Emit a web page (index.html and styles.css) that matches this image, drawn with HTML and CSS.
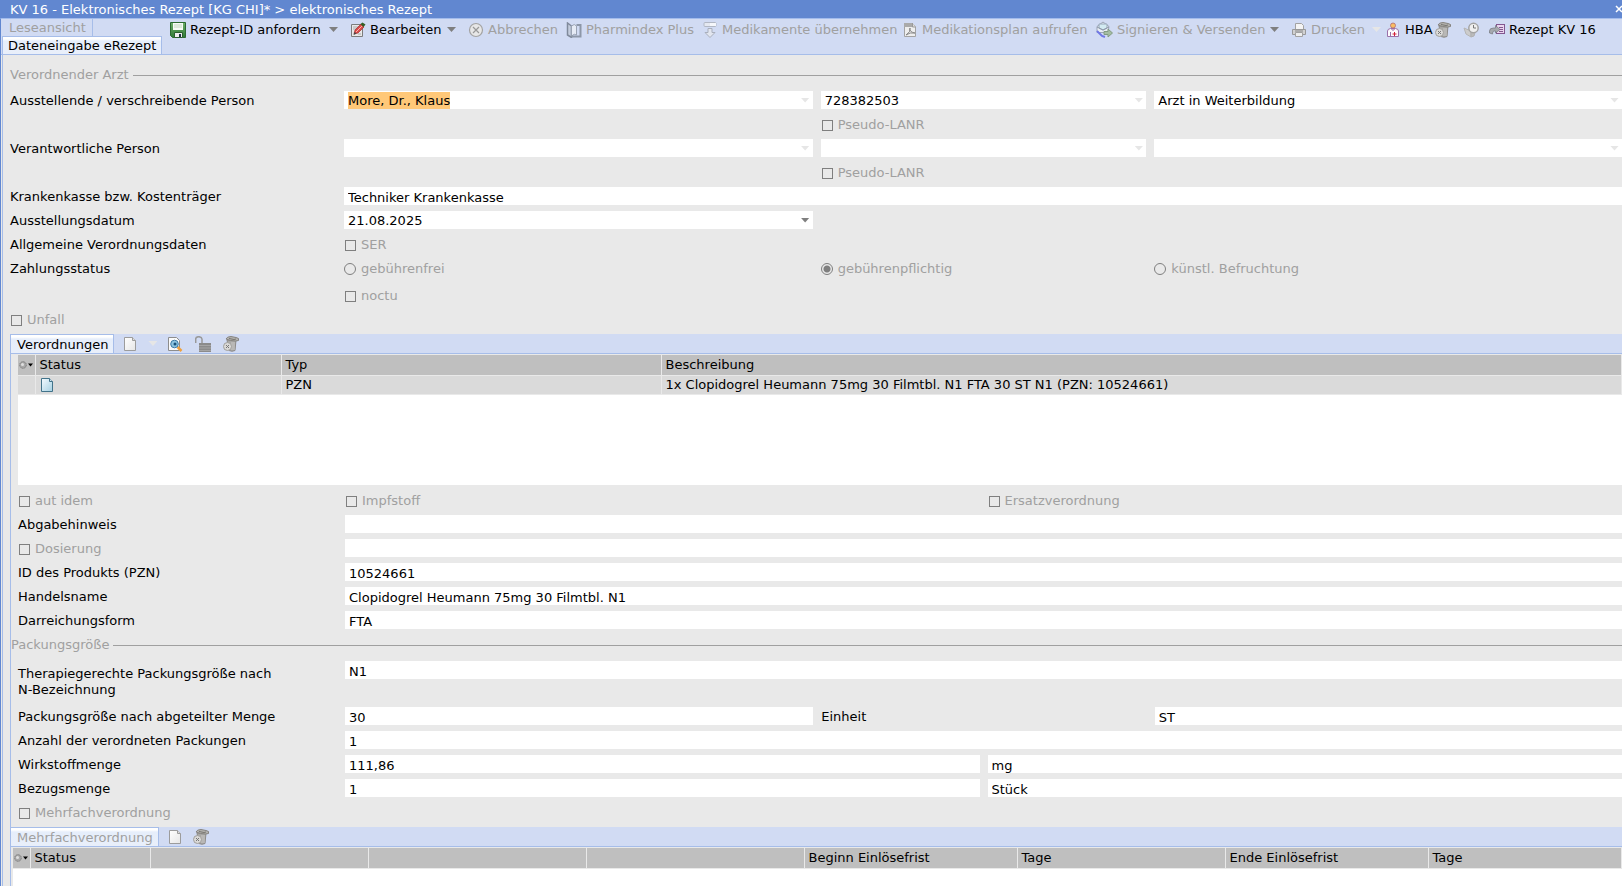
FILE: index.html
```html
<!DOCTYPE html>
<html lang="de">
<head>
<meta charset="utf-8">
<title>KV 16 - Elektronisches Rezept</title>
<link rel="stylesheet" href="styles.css">
</head>
<body>
<svg class="defs" aria-hidden="true">
  <defs>
    <linearGradient id="gPage" x1="0" y1="0" x2="1" y2="1"><stop offset="0" stop-color="#fff"/><stop offset="1" stop-color="#e6e6e6"/></linearGradient>
    <linearGradient id="gBlue" x1="0" y1="0" x2="1" y2="1"><stop offset="0" stop-color="#f4fbff"/><stop offset="1" stop-color="#a5d0e2"/></linearGradient>
    <linearGradient id="gGreen" x1="0" y1="0" x2="0" y2="1"><stop offset="0" stop-color="#6fae6a"/><stop offset="1" stop-color="#2f7a35"/></linearGradient>
    <symbol id="trash" viewBox="0 0 16 16">
      <path d="M4 4h9l-1 10.500q-3 1.500-6 0z" fill="#a9a8a6" stroke="#8d8b88"/>
      <path d="M9 6v8M11 6v8" stroke="#c9c8c6"/>
      <path d="M3 3q1-2.500 5-2.500l5 1 2.500 1v2l-3 .5-5-.5z" fill="#b4b3b0" stroke="#85837f"/>
      <path d="m6 2.500 5 1 2-.5" fill="none" stroke="#77756f"/>
      <circle cx="4.500" cy="10.500" r="4" fill="#dad9d7" stroke="#a09f9c"/>
      <path d="m3 9 3 3m0-3-3 3" stroke="#777"/>
    </symbol>
    <symbol id="page" viewBox="0 0 16 16"><path d="M2.500 1.500h8l3 3v10h-11z" fill="url(#gPage)" stroke="#9c9c9c"/><path d="M10.500 1.500v3h3" fill="#ddd" stroke="#9c9c9c"/></symbol>
    <symbol id="gear" viewBox="0 0 16 10"><circle cx="5" cy="5" r="3.300" fill="#a8a8a8" stroke="#7d7d7d" stroke-dasharray="1.600 .6"/><circle cx="4.500" cy="4.500" r="1.500" fill="#dedede"/><path d="M10 3.500h5l-2.500 3z" fill="#000"/></symbol>
  </defs>
</svg>
<header class="titlebar">
  <h1>KV 16 - Elektronisches Rezept [KG CHI]* &gt; elektronisches Rezept</h1>
  <button class="close" type="button" aria-label="Schließen"><svg viewBox="0 0 8 8"><path d="m1 1 6 6m0-6-6 6" stroke="#fff" stroke-width="1.500"/></svg></button>
</header>
<div class="window">
  <div class="topbar">
    <div class="tabs">
      <button class="tab-plain" type="button" disabled>Leseansicht</button>
      <button class="tab" type="button">Dateneingabe eRezept</button>
    </div>
    <div class="toolbar">
      <div class="tool t-save"><button type="button"><svg viewBox="0 0 16 16"><path d="M.5.500h15v15H2.500l-2-2z" fill="url(#gGreen)" stroke="#2c6a31"/><path d="M3 1h10v7H3z" fill="#f7fbf5"/><path d="M4 3h8M4 5h8" stroke="#c3d6bf"/><path d="M4.500 10.500h8v5h-8z" fill="#eee" stroke="#295e2c"/><path d="M9 12h2v3H9z" fill="#234"/></svg>Rezept-ID anfordern</button><button class="drop" type="button" aria-label="Optionen"></button></div>
      <div class="tool t-edit"><button type="button"><svg viewBox="0 0 16 16"><path d="M1.500 2.500h11v12h-11z" fill="#e8e8e8" stroke="#7c7c7c"/><path d="M3 5h6M3 7h4M8 12h3" stroke="#aaa"/><path d="m4 12 1-4 6-6 3 3-6 6z" fill="#d94a4a" stroke="#a23030" stroke-width=".7"/><path d="m6 10 6-6" stroke="#ffb0a8"/><path d="m10.500 2 2-1.500 3 2-2 2.500z" fill="#355f25"/><path d="m3.500 13 1-3 2 1.500z" fill="#444"/></svg>Bearbeiten</button><button class="drop" type="button" aria-label="Optionen"></button></div>
      <div class="tool t-cancel"><button type="button" disabled><svg viewBox="0 0 16 16"><circle cx="8" cy="8" r="6.500" fill="#e7e7e7" stroke="#a3a3a3" stroke-width="1.200"/><path d="m5 5 6 6m0-6-6 6" stroke="#999" stroke-width="1.200"/></svg>Abbrechen</button></div>
      <div class="tool t-pharm"><button type="button" disabled><svg viewBox="0 0 16 16"><path d="M1.500 1v12l4 2.500V4z" fill="#c4cddd" stroke="#808a9b" stroke-width="1.500"/><path d="M5.500 4q3-3 5 0v9q-2-2-5 1z" fill="#e6ebf5" stroke="#9aa3b3"/><path d="M10.500 3h4v11.500h-9" fill="none" stroke="#8d97a8" stroke-width="2"/></svg>Pharmindex Plus</button></div>
      <div class="tool t-medi"><button type="button" disabled><svg viewBox="0 0 16 16"><rect x="2" y=".5" width="12" height="4" rx="1" fill="#e4e8f1" stroke="#b1b7c4"/><path d="M8 1h6v3H8z" fill="#f5f7fb"/><path d="M6 6.500h4v4h3l-5 5-5-5h3z" fill="#e2e6ef" stroke="#a9afbc"/></svg>Medikamente übernehmen</button></div>
      <div class="tool t-plan"><button type="button" disabled><svg viewBox="0 0 16 16"><path d="M2.500 1.500h8l3 3v10h-11z" fill="#eee" stroke="#a3a3a3"/><path d="M2 1h8v4H2z" fill="#aaa"/><path d="M10.500 1v4h3" fill="#ddd" stroke="#999"/><path d="M4 13q5-3 4-7-1 4 5 5-5-1-9 2" fill="none" stroke="#888"/></svg>Medikationsplan aufrufen</button></div>
      <div class="tool t-sign"><button type="button" disabled><svg class="wide" viewBox="0 0 18 17"><path d="M2 5.500 8 1l6 4.500-1 6H2z" fill="#e8edf5" stroke="#9ba5b6"/><path d="M4 3h8v4L8 9 4 7z" fill="#d3ebf2" stroke="#98a7b8"/><path d="m2 6 6 3 6-3" fill="none" stroke="#8e98a9"/><path d="m2 10 5 5 3 1" fill="none" stroke="#7078e6" stroke-width="2"/><path d="M9 10.500h4V8l4.500 4-4.500 4v-2.500H9z" fill="#a4bda2" stroke="#829b82"/></svg>Signieren &amp; Versenden</button><button class="drop" type="button" aria-label="Optionen"></button></div>
      <div class="tool t-print"><button type="button" disabled><svg viewBox="0 0 16 16"><path d="M4.500 1.500h6l2 2V8h-8z" fill="#f4f4f4" stroke="#a2a2a2"/><path d="M1.500 7.500h13v5h-13z" fill="#d1d1d1" stroke="#999"/><path d="M4 9h8" stroke="#888"/><path d="M4.500 10.500h7v4h-7z" fill="#eee" stroke="#a2a2a2"/></svg>Drucken</button><button class="drop pale" type="button" aria-label="Optionen" disabled></button></div>
      <div class="tool t-hba"><button type="button"><svg viewBox="0 0 16 16"><path d="M2.500 14.500V9q0-2 3-2.500h5q3 .5 3 2.500v5.500z" fill="#fdfafd" stroke="#9a70a8"/><path d="M5.500 14V10" stroke="#9a70a8"/><circle cx="8" cy="3.500" r="2.500" fill="#f8bd62" stroke="#b06a72" stroke-width=".8"/><path d="M6.500 7 8 8.500 9.500 7" fill="none" stroke="#8a5a9b"/><path d="M9.500 10v4M7.500 12h4" stroke="#d02038"/></svg>HBA</button></div>
      <button class="icon-only t-trash" type="button" aria-label="Löschen"><svg><use href="#trash"/></svg></button>
      <button class="icon-only t-clock" type="button" aria-label="Verlauf"><svg viewBox="0 0 16 16"><path d="m1 6 7 3v6L3 12z" fill="#ccc" stroke="#b5b5b5"/><path d="m8 9 5-2-2 7-3 1z" fill="#bbb" stroke="#b0b0b0"/><circle cx="10.500" cy="6" r="4.700" fill="#efefef" stroke="#a3a3a3" stroke-width="1.500"/><path d="M10.500 3v3H13" fill="none" stroke="#777"/></svg></button>
      <div class="tool t-kv"><button type="button"><svg viewBox="0 0 16 16"><rect x="7.500" y="2.500" width="8" height="9" fill="#e9d6ef" stroke="#83568f"/><path d="M10 5.500h4M10 7.500h4M10 9.500h4" stroke="#83568f"/><path d="M.5 11V9q0-3 4-3h2V3.500L11 7.500l-4.500 3.500V9H5Q3.500 9 3.500 12z" fill="#a6a9ae" stroke="#74777d" stroke-width=".7"/></svg>Rezept KV 16</button></div>
    </div>
  </div>

  <main class="form">
    <section class="doctor">
      <h2 class="legend">Verordnender Arzt</h2>
      <div class="row cols">
        <label for="aus">Ausstellende / verschreibende Person</label>
        <div class="combo"><select id="aus" class="marked"><option>More, Dr., Klaus</option></select></div>
        <div class="combo"><select aria-label="LANR"><option>728382503</option></select></div>
        <div class="combo"><select aria-label="Funktion"><option>Arzt in Weiterbildung</option></select></div>
      </div>
      <div class="row cols"><label class="check second"><input type="checkbox" disabled>Pseudo-LANR</label></div>
      <div class="row cols">
        <label for="ver">Verantwortliche Person</label>
        <div class="combo"><select id="ver"><option></option></select></div>
        <div class="combo"><select aria-label="LANR der verantwortlichen Person"><option></option></select></div>
        <div class="combo"><select aria-label="Funktion der verantwortlichen Person"><option></option></select></div>
      </div>
      <div class="row cols"><label class="check second"><input type="checkbox" disabled>Pseudo-LANR</label></div>
      <div class="row cols"><label for="kk">Krankenkasse bzw. Kostenträger</label><input class="full" id="kk" type="text" value="Techniker Krankenkasse"></div>
      <div class="row cols"><label for="dat">Ausstellungsdatum</label><div class="combo active"><select id="dat"><option>21.08.2025</option></select></div></div>
      <div class="row cols"><span>Allgemeine Verordnungsdaten</span><label class="check"><input type="checkbox" disabled>SER</label></div>
      <div class="row cols"><span>Zahlungsstatus</span>
        <label class="check radio"><input type="radio" name="zahl" disabled>gebührenfrei</label>
        <label class="check radio"><input type="radio" name="zahl" checked disabled>gebührenpflichtig</label>
        <label class="check radio"><input type="radio" name="zahl" disabled>künstl. Befruchtung</label>
      </div>
      <div class="row cols noctu"><label class="check first"><input type="checkbox" disabled>noctu</label></div>
      <div class="row"><label class="check accident"><input type="checkbox" disabled>Unfall</label></div>
    </section>

    <section class="panel">
      <div class="tabbar">
        <button class="tab" type="button">Verordnungen</button>
        <button class="icon-only p-new" type="button" aria-label="Neu"><svg><use href="#page"/></svg></button>
        <button class="drop pale" type="button" aria-label="Optionen" disabled></button>
        <button class="icon-only p-view" type="button" aria-label="Vorschau"><svg viewBox="0 0 16 16"><path d="M1.500 1.500h8l3 3v10h-11z" fill="#fafafa" stroke="#8d8d8d"/><path d="m10.500 11 4 4" stroke="#efa13e" stroke-width="2.500"/><circle cx="7.500" cy="8" r="3.800" fill="#8cc4e0" stroke="#3d7ba6"/><circle cx="8" cy="8" r="1.500" fill="#164f78"/></svg></button>
        <button class="icon-only p-lock" type="button" aria-label="Entsperren"><svg viewBox="0 0 16 16"><path d="M.7 7V3q0-2.300 3-2.300T7 3v4" fill="none" stroke="#999" stroke-width="1.500"/><path d="M4 7h12v9H4z" fill="#8b8b8b"/><path d="M4 9.500h12M4 12h12M4 14.500h12" stroke="#a5a5a5"/></svg></button>
        <button class="icon-only p-trash" type="button" aria-label="Löschen"><svg><use href="#trash"/></svg></button>
      </div>
      <div class="grid-area">
        <table class="grid orders">
          <colgroup><col class="c-gear"><col class="c-status"><col class="c-typ"><col></colgroup>
          <thead><tr><th><svg class="gear"><use href="#gear"/></svg></th><th>Status</th><th>Typ</th><th>Beschreibung</th></tr></thead>
          <tbody><tr><td></td><td><svg class="doc" viewBox="0 0 14 14"><path d="M1.500.500h8l3 3v10h-11z" fill="url(#gBlue)" stroke="#42738a"/><path d="M9.500.500v3h3" fill="#cfe6f0" stroke="#42738a"/></svg></td><td>PZN</td><td>1x Clopidogrel Heumann 75mg 30 Filmtbl. N1 FTA 30 ST N1 (PZN: 10524661)</td></tr></tbody>
        </table>
      </div>
      <div class="fields">
        <div class="row half"><label class="check"><input type="checkbox" disabled>aut idem</label><label class="check"><input type="checkbox" disabled>Impfstoff</label><label class="check"><input type="checkbox" disabled>Ersatzverordnung</label></div>
        <div class="row cols"><label for="abg">Abgabehinweis</label><input class="full" id="abg" type="text"></div>
        <div class="row cols"><label class="check"><input type="checkbox" disabled>Dosierung</label><input class="full" type="text" aria-label="Dosierung"></div>
        <div class="row cols"><label for="pzn">ID des Produkts (PZN)</label><input class="full" id="pzn" type="text" value="10524661"></div>
        <div class="row cols"><label for="han">Handelsname</label><input class="full" id="han" type="text" value="Clopidogrel Heumann 75mg 30 Filmtbl. N1"></div>
        <div class="row cols"><label for="dar">Darreichungsform</label><input class="full" id="dar" type="text" value="FTA"></div>
      </div>
      <h2 class="legend pack">Packungsgröße</h2>
      <div class="fields">
        <div class="row cols tall"><label for="nbez">Therapiegerechte Packungsgröße nach<br>N-Bezeichnung</label><input class="full" id="nbez" type="text" value="N1"></div>
        <div class="row cols"><label for="men">Packungsgröße nach abgeteilter Menge</label><input id="men" type="text" value="30"><label for="ein">Einheit</label><input id="ein" type="text" value="ST"></div>
        <div class="row cols"><label for="anz">Anzahl der verordneten Packungen</label><input class="full" id="anz" type="text" value="1"></div>
        <div class="row half"><label for="wir">Wirkstoffmenge</label><input id="wir" type="text" value="111,86"><input type="text" aria-label="Einheit der Wirkstoffmenge" value="mg"></div>
        <div class="row half"><label for="bez">Bezugsmenge</label><input id="bez" type="text" value="1"><input type="text" aria-label="Einheit der Bezugsmenge" value="Stück"></div>
        <div class="row"><label class="check"><input type="checkbox" disabled>Mehrfachverordnung</label></div>
      </div>
      <div class="tabbar multi">
        <button class="tab" type="button" disabled>Mehrfachverordnung</button>
        <button class="icon-only p-new" type="button" aria-label="Neu"><svg><use href="#page"/></svg></button>
        <button class="icon-only m-trash" type="button" aria-label="Löschen"><svg><use href="#trash"/></svg></button>
      </div>
      <div class="grid-area multi-area">
        <table class="grid multi-grid">
          <colgroup><col class="c-gear"><col class="m-status"><col class="m-wide"><col class="m-wide"><col class="m-wide"><col class="m-days"><col class="m-end"><col class="m-sum"><col></colgroup>
          <thead><tr><th><svg class="gear"><use href="#gear"/></svg></th><th>Status</th><th></th><th></th><th></th><th>Beginn Einlösefrist</th><th>Tage</th><th>Ende Einlösefrist</th><th>Tage</th></tr></thead>
        </table>
      </div>
    </section>
  </main>
</div>
</body>
</html>
```
FILE: styles.css
```css
* { box-sizing: border-box; }
html, body { height: 100%; }
body {
  margin: 0;
  display: flex;
  flex-direction: column;
  overflow: hidden;
  background: #e9e9e9;
  color: #000;
  font: 13px/16px Verdana, "DejaVu Sans", sans-serif;
}
button, input, select { font: inherit; color: inherit; margin: 0; padding: 0; border: 0; border-radius: 0; }
button { background: none; white-space: nowrap; }
button:disabled { color: #a0a0a0; }
svg { display: block; flex: none; width: 16px; height: 16px; fill: none; }
.defs { position: absolute; width: 0; height: 0; }

.titlebar {
  display: flex;
  flex: none;
  justify-content: space-between;
  align-items: center;
  height: 18px;
  padding-left: 10px;
  background: #6187d0;
  color: #fff;
  overflow: hidden;
}
.titlebar h1 { margin: 0; padding-top: 2px; font-size: 13px; font-weight: normal; }
.close { width: 7px; overflow: hidden; }
.close svg { width: 8px; height: 8px; }

.window {
  flex: 1;
  display: flex;
  flex-direction: column;
  min-height: 0;
  border-top: 1px solid #a3bcec;
  border-left: 1px solid #6187d0;
}
.topbar {
  flex: none;
  display: flex;
  height: 36px;
  padding-left: 1px;
  background: #d1dbf3;
  border-bottom: 1px solid #a6bde9;
}
.tabs { width: 168px; display: flex; flex-direction: column; align-items: flex-start; }
.tab-plain { height: 17px; padding: 1px 6px 0 7px; border-right: 1px solid #a6bde9; }
.tab {
  height: 19px;
  padding: 0 5px;
  border: 1px solid #a6bde9;
  border-bottom: 0;
  background: linear-gradient(#fff 0, #fff 2px, #e6eefb 4px, #e9effa 100%);
}
.toolbar { flex: 1; display: flex; height: 21px; align-items: center; }
.tool { display: flex; align-items: center; flex: none; }
.tool button:first-child { display: flex; align-items: center; gap: 4px; }
.wide { width: 18px; height: 17px; }
.drop { width: 9px; height: 5px; background: #7f7f7f; clip-path: polygon(0 0, 100% 0, 50% 100%); }
.tool .drop { margin-left: auto; }
.drop.pale { background: #e6e6e6; }
.t-save { width: 168px; }
.t-edit { width: 106px; }
.t-save, .t-edit { margin-right: 12px; }
.t-cancel { width: 98px; }
.t-pharm { width: 136px; }
.t-medi { width: 200px; }
.t-plan { width: 193px; }
.t-sign { width: 184px; margin-right: 12px; }
.t-print { width: 90px; margin-right: 4px; }
.t-hba { width: 50px; }
.t-trash { margin-right: 12px; }
.t-clock { margin-right: 10px; }

.form {
  flex: 1;
  min-height: 0;
  display: flex;
  flex-direction: column;
  margin-left: 1px;
  border-left: 1px solid #a6bde9;
}
.doctor { padding: 12px 0 6px 7px; display: flex; flex-direction: column; gap: 6px; }
.legend {
  display: flex;
  align-items: center;
  gap: 4px;
  margin: 0;
  color: #a0a0a0;
  font-size: 13px;
  font-weight: normal;
}
.legend::after { content: ""; flex: 1; height: 1px; background: #a0a0a0; }
.doctor .legend { margin-bottom: 2px; }
.row { display: grid; height: 18px; align-items: center; column-gap: 8px; white-space: nowrap; }
.row > label, .row > span { padding-top: 2px; }
.cols { grid-template-columns: 326px 469fr 326fr 468fr; }
.half { grid-template-columns: 319px 1fr 1fr; }
.fields .cols { grid-template-columns: 319px 469fr 326fr 468fr; }
.full { grid-column: 2 / -1; }
.first { grid-column: 2; }
.second { grid-column: 3; }
input[type="text"] { width: 100%; min-width: 0; height: 18px; padding: 2px 4px 0; background: #fff; }
.combo { display: flex; align-items: center; min-width: 0; height: 18px; padding: 0 3px 0 4px; background: #fff; }
.combo select { appearance: none; flex: 1; min-width: 0; height: 18px; padding-top: 2px; background: none; }
.combo select.marked { flex: none; height: 17px; padding-top: 1px; field-sizing: content; background: #ffc878; }
.combo::after { content: ""; width: 9px; height: 5px; margin-left: auto; background: #e6e6e6; clip-path: polygon(0 0, 100% 0, 50% 100%); }
.combo.active::after { background: #7f7f7f; }
.check { display: flex; align-items: center; gap: 5px; padding-left: 1px; color: #a0a0a0; }
.check input { appearance: none; width: 11px; height: 11px; border: 1px solid #7f7f7f; }
.radio { padding-left: 0; gap: 5px; }
.radio input { width: 12px; height: 12px; border-radius: 50%; }
.radio input:checked { background: radial-gradient(circle, #7f7f7f 3px, transparent 4px); }
.noctu { margin-top: 3px; }

.panel {
  flex: 1;
  min-height: 0;
  display: flex;
  flex-direction: column;
  margin-left: 7px;
  border-left: 1px solid #a6bde9;
}
.tabbar {
  flex: none;
  display: flex;
  align-items: center;
  height: 20px;
  background: #d1dbf3;
  border-bottom: 1px solid #a6bde9;
}
.tabbar .tab { border-left: 0; padding: 1px 5px 0 6px; }
.p-new { margin-left: 8px; margin-right: 10px; }
.p-view { margin-left: 10px; }
.p-lock { margin-left: 12px; }
.p-trash { margin-left: 12px; }
.grid-area { flex: none; height: 130px; margin: 1px 0 6px 7px; background: #fff; }
.grid { width: 100%; table-layout: fixed; border-collapse: collapse; }
.grid th, .grid td {
  height: 20px;
  padding: 1px 0 0 4px;
  border-right: 1px solid #e9e9e9;
  border-bottom: 1px solid #e9e9e9;
  background: #dadada;
  font-weight: normal;
  text-align: left;
  white-space: nowrap;
}
.grid td { height: 19px; padding-top: 0; }
.grid th { background: #bfbfbf; }
.grid th:first-child { padding: 0; }
.gear { width: 16px; height: 10px; }
.doc { width: 14px; height: 14px; }
.c-gear { width: 17px; }
.c-status { width: 246px; }
.c-typ { width: 380px; }
.fields { display: flex; flex-direction: column; gap: 6px; padding-left: 7px; }
.legend.pack { margin: 8px 0; }
.tall { height: 40px; align-items: start; }
.row.tall label { padding-top: 5px; }
.tabbar.multi { margin-top: 6px; }
.grid-area.multi-area { flex: 1; margin: 1px 0 0 2px; }
.m-status { width: 120px; }
.m-wide { width: 218px; }
.m-days { width: 213px; }
.m-end { width: 208px; }
.m-sum { width: 203px; }
```
